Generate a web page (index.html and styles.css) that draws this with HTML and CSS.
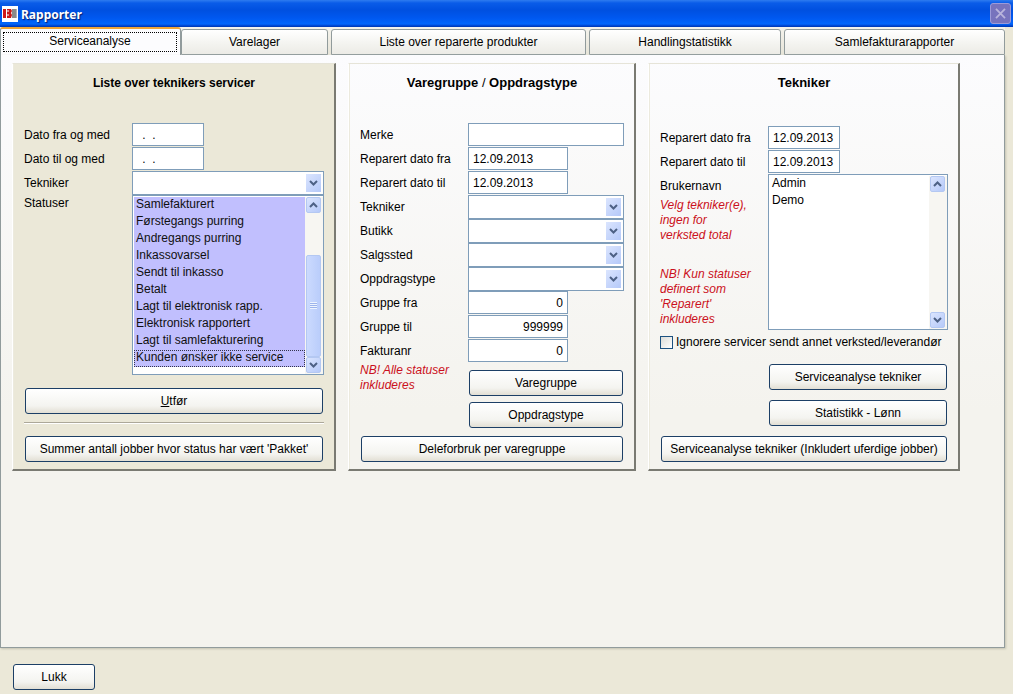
FILE: index.html
```html
<!DOCTYPE html>
<html lang="nb">
<head>
<meta charset="utf-8">
<title>Rapporter</title>
<link rel="stylesheet" href="styles.css">
</head>
<body>
<svg class="symbols" aria-hidden="true">
  <symbol id="down" viewBox="0 0 9 6"><path d="M1 1 L4.500 4.500 L8 1" fill="none" stroke="#4d6185" stroke-width="2"/></symbol>
  <symbol id="up" viewBox="0 0 9 6"><path d="M1 5 L4.500 1.500 L8 5" fill="none" stroke="#4d6185" stroke-width="2"/></symbol>
</svg>
<header class="titlebar">
  <svg class="logo" viewBox="0 0 16 16" aria-hidden="true">
    <rect width="16" height="16" fill="#fff"/>
    <path d="M1 3h3v9H1z" fill="#d01818"/>
    <path d="M5 3h4l1 2-1 2 1 2-1 3H5V3z" fill="#c81818"/>
    <path d="M5 5h2M5 9h2" stroke="#fff" stroke-width="1"/>
    <path d="M10 3h4v9h-4z" fill="#8a8a8a"/>
    <path d="M14 3h1v9h-1z" fill="#b5b0b0"/>
  </svg>
  <h1 class="title">Rapporter</h1>
  <button class="close" type="button" aria-label="Lukk vindu">
    <svg viewBox="0 0 21 21" aria-hidden="true"><path d="M5.500 5.500 L15.500 15.500 M15.500 5.500 L5.500 15.500" stroke="#b9b4dc" stroke-width="2"/></svg>
  </button>
</header>

<div class="tabs" role="tablist">
  <button class="tab tab-selected" type="button" role="tab" aria-selected="true"><span class="tab-focus">Serviceanalyse</span></button>
  <button class="tab" type="button" role="tab">Varelager</button>
  <button class="tab" type="button" role="tab">Liste over reparerte produkter</button>
  <button class="tab" type="button" role="tab">Handlingstatistikk</button>
  <button class="tab" type="button" role="tab">Samlefakturarapporter</button>
</div>

<main class="page" role="tabpanel">
  <section class="panel panel-beige">
    <h2 class="heading">Liste over teknikers servicer</h2>
    <div class="fields">
      <label class="label" for="d1">Dato fra og med</label>
      <input class="input date blank" id="d1" type="text" value=" .  .">
      <label class="label" for="d2">Dato til og med</label>
      <input class="input date blank" id="d2" type="text" value=" .  .">
      <label class="label" for="t1">Tekniker</label>
      <div class="combo"><select class="combo-box" id="t1"><option></option></select><span class="combo-arrow"><svg class="arrow"><use href="#down"/></svg></span></div>
      <label class="label label-top" for="st">Statuser</label>
      <div class="list statuses">
        <select class="list-box" id="st" multiple size="10">
          <option selected>Samlefakturert</option>
          <option selected>Førstegangs purring</option>
          <option selected>Andregangs purring</option>
          <option selected>Inkassovarsel</option>
          <option selected>Sendt til inkasso</option>
          <option selected>Betalt</option>
          <option selected>Lagt til elektronisk rapp.</option>
          <option selected>Elektronisk rapportert</option>
          <option selected>Lagt til samlefakturering</option>
          <option selected class="current">Kunden ønsker ikke service</option>
        </select>
        <div class="scroll">
          <button class="scroll-button" type="button" aria-label="Rull opp"><svg class="arrow"><use href="#up"/></svg></button>
          <div class="track"><div class="thumb"><span class="grip"></span></div></div>
          <button class="scroll-button" type="button" aria-label="Rull ned"><svg class="arrow"><use href="#down"/></svg></button>
        </div>
      </div>
    </div>
    <button class="button run" type="button"><u>U</u>tfør</button>
    <hr class="divider">
    <button class="button" type="button">Summer antall jobber hvor status har vært 'Pakket'</button>
  </section>

  <section class="panel">
    <h2 class="heading heading-wide">Varegruppe <span class="slash">/</span> Oppdragstype</h2>
    <div class="fields">
      <label class="label" for="m">Merke</label>
      <input class="input" id="m" type="text">
      <label class="label" for="rf">Reparert dato fra</label>
      <input class="input medium" id="rf" type="text" value="12.09.2013">
      <label class="label" for="rt">Reparert dato til</label>
      <input class="input medium" id="rt" type="text" value="12.09.2013">
      <label class="label" for="t2">Tekniker</label>
      <div class="combo"><select class="combo-box" id="t2"><option></option></select><span class="combo-arrow"><svg class="arrow"><use href="#down"/></svg></span></div>
      <label class="label" for="bu">Butikk</label>
      <div class="combo"><select class="combo-box" id="bu"><option></option></select><span class="combo-arrow"><svg class="arrow"><use href="#down"/></svg></span></div>
      <label class="label" for="sa">Salgssted</label>
      <div class="combo"><select class="combo-box" id="sa"><option></option></select><span class="combo-arrow"><svg class="arrow"><use href="#down"/></svg></span></div>
      <label class="label" for="op">Oppdragstype</label>
      <div class="combo"><select class="combo-box" id="op"><option></option></select><span class="combo-arrow"><svg class="arrow"><use href="#down"/></svg></span></div>
      <label class="label" for="gf">Gruppe fra</label>
      <input class="input medium number" id="gf" type="text" value="0">
      <label class="label" for="gt">Gruppe til</label>
      <input class="input medium number" id="gt" type="text" value="999999">
      <label class="label" for="fn">Fakturanr</label>
      <input class="input medium number" id="fn" type="text" value="0">
      <p class="note">NB! Alle statuser inkluderes</p>
      <div class="group-actions">
        <button class="button" type="button">Varegruppe</button>
        <button class="button" type="button">Oppdragstype</button>
      </div>
    </div>
    <button class="button parts" type="button">Deleforbruk per varegruppe</button>
  </section>

  <section class="panel">
    <h2 class="heading heading-wide heading-tall">Tekniker</h2>
    <div class="fields">
      <label class="label" for="r3">Reparert dato fra</label>
      <input class="input date" id="r3" type="text" value="12.09.2013">
      <label class="label" for="r4">Reparert dato til</label>
      <input class="input date" id="r4" type="text" value="12.09.2013">
      <div class="side">
        <label class="label" for="us">Brukernavn</label>
        <p class="note">Velg tekniker(e), ingen for verksted total</p>
        <p class="note note-low">NB! Kun statuser definert som 'Reparert' inkluderes</p>
      </div>
      <div class="list">
        <select class="list-box" id="us" multiple size="9">
          <option>Admin</option>
          <option>Demo</option>
        </select>
        <div class="scroll">
          <button class="scroll-button" type="button" aria-label="Rull opp"><svg class="arrow"><use href="#up"/></svg></button>
          <div class="track"></div>
          <button class="scroll-button" type="button" aria-label="Rull ned"><svg class="arrow"><use href="#down"/></svg></button>
        </div>
      </div>
    </div>
    <label class="check"><input class="check-box" type="checkbox">Ignorere servicer sendt annet verksted/leverandør</label>
    <div class="technician-actions">
      <button class="button indented" type="button">Serviceanalyse tekniker</button>
      <button class="button indented" type="button">Statistikk - Lønn</button>
      <button class="button" type="button">Serviceanalyse tekniker (Inkludert uferdige jobber)</button>
    </div>
  </section>
</main>

<footer class="footer">
  <button class="button exit" type="button">Lukk</button>
</footer>
</body>
</html>
```
FILE: styles.css
```css
* { box-sizing: border-box; }

body {
  margin: 0;
  min-height: 100vh;
  display: flex;
  flex-direction: column;
  background: #ebe8d8;
  color: #000;
  font: 12px/16px "Liberation Sans", Arial, sans-serif;
}

button, input, select { font: inherit; color: inherit; }

.symbols { display: none; }

.titlebar {
  display: flex;
  align-items: center;
  height: 27px;
  padding: 0 2px;
  background: linear-gradient(#2e7cf0 0, #0a5ce8 3px, #0050e0 10px, #0058f0 18px, #0266fc 24px, #0040c8 26px, #0038b0 27px);
}
.logo { width: 16px; height: 16px; }
.title {
  flex: 1;
  margin: 0;
  padding: 2px 0 0 3px;
  color: #fff;
  font: bold 12px/16px "Noto Sans", sans-serif;
  text-shadow: 1px 1px 1px #0a1f70;
}
.close {
  width: 21px;
  height: 21px;
  padding: 0;
  border: 1px solid #9c9ad8;
  border-radius: 3px;
  background: #7773bd;
}
.close svg { display: block; width: 100%; height: 100%; }

.tabs {
  display: grid;
  grid-template-columns: 178fr 147fr 255fr 192fr 221fr;
  align-items: end;
  gap: 3px;
  height: 28px;
  margin-right: 8px;
  background: linear-gradient(#f4f3ec, #e6e4d8);
}
.tab {
  min-width: 0;
  height: 26px;
  padding: 0;
  border: 1px solid #919b9c;
  border-radius: 3px 3px 0 0;
  background: linear-gradient(#fff, #f3f3ef 60%, #ecebe6);
  white-space: nowrap;
}
.tab-selected {
  height: 28px;
  margin-right: -3px;
  padding: 2px 3px 3px 2px;
  border-top: 2px solid #efa638;
  border-bottom: 0;
  background: #fcfcfe;
}
.tab-focus {
  display: block;
  height: 20px;
  border: 1px dotted #000;
  line-height: 17px;
}

.page {
  flex: 1;
  display: grid;
  grid-template-columns: 324fr 288fr 312fr;
  align-items: start;
  gap: 12px;
  margin-right: 8px;
  padding: 8px 44px 12px 11px;
  border: solid #919b9c;
  border-width: 0 1px 1px;
  background: linear-gradient(#fcfcfe, #f4f3ee 60%);
  box-shadow: 1px 1px 2px #c4c2b2;
}

.panel {
  display: flex;
  flex-direction: column;
  padding: 0 10px 7px 11px;
  border: 1px solid #fff;
  border-top-color: #e6e4d8;
  border-right: 2px solid #7a7a72;
  border-bottom: 2px solid #7a7a72;
  box-shadow: inset 1px 0 #eceade;
}
.panel-beige { background: #ebe8d8; }

.heading {
  height: 59px;
  margin: 0;
  padding-top: 11px;
  font: bold 12px/16px "Liberation Sans", Arial, sans-serif;
  text-align: center;
}
.heading-wide { font-size: 13px; }
.heading-tall { height: 62px; }
.slash { font-weight: normal; }

.fields {
  display: grid;
  grid-template-columns: 108px 1fr;
  grid-auto-rows: minmax(24px, auto);
}
.label { line-height: 24px; }
.label-top { line-height: 16px; }

.input {
  width: 100%;
  height: 23px;
  padding: 0 4px;
  border: 1px solid #7f9db9;
  background: #fff;
}
.date { width: 72px; }
.medium { width: 100px; }
.blank { padding-left: 6px; }
.number { text-align: right; }

.combo { display: grid; }
.combo-box {
  grid-area: 1 / 1;
  width: 100%;
  height: 24px;
  border: 1px solid #7f9db9;
  border-radius: 0;
  background: #fff;
  appearance: none;
}
.combo-arrow {
  grid-area: 1 / 1;
  justify-self: end;
  align-self: center;
  display: grid;
  place-items: center;
  width: 15px;
  height: 18px;
  margin-right: 3px;
  background: linear-gradient(135deg, #dbe5fe, #b5c9f9);
  pointer-events: none;
}
.arrow { display: block; width: 9px; height: 6px; }

.list {
  display: flex;
  height: 156px;
  padding-top: 1px;
  border: 1px solid #7f9db9;
  background: #fff;
}
.statuses { height: 180px; }
.list-box {
  flex: 1;
  min-width: 0;
  height: 100%;
  padding: 0 0 0 1px;
  border: 0;
  border-radius: 0;
  background: #fff;
  overflow: hidden;
}
.list-box option {
  min-height: 17px;
  height: 17px;
  padding: 0 2px;
  line-height: 19px;
}
.list-box option:checked { background: linear-gradient(#c1bffe, #c1bffe); }
.current { outline: 1px dotted #33334d; outline-offset: -1px; }

.scroll {
  display: flex;
  flex-direction: column;
  width: 18px;
  padding: 0 2px 1px 1px;
  background: #f7f6f2;
}
.scroll-button {
  display: grid;
  place-items: center;
  width: 15px;
  height: 16px;
  padding: 0;
  border: 1px solid #b4c8f2;
  border-radius: 2px;
  background: linear-gradient(135deg, #dbe5fe, #b5c9f9);
}
.track {
  flex: 1;
  display: flex;
  align-items: flex-end;
}
.thumb {
  display: grid;
  place-items: center;
  width: 15px;
  height: 71%;
  border: 1px solid #b4c8f2;
  border-radius: 2px;
  background: linear-gradient(90deg, #cbdafe, #bacdfb);
}
.grip {
  width: 7px;
  height: 7px;
  background: repeating-linear-gradient(#eef4fe 0 1px, #9db4ec 1px 2px);
}

.button {
  height: 26px;
  margin: 0 1px;
  padding: 0 4px;
  border: 1px solid #1c3f66;
  border-radius: 3px;
  background: linear-gradient(#fff, #f4f4f0 70%, #e2dfd4);
  white-space: nowrap;
}
.run { margin-top: 13px; }
.divider {
  width: 100%;
  height: 2px;
  margin: 8px 0 12px;
  border: 0;
  border-top: 1px solid #aca899;
  background: #fff;
}
.group-actions {
  display: flex;
  flex-direction: column;
  gap: 6px;
  padding-top: 7px;
}
.parts { margin-top: 8px; }

.note {
  margin: 0;
  color: #cb1020;
  font-style: italic;
  line-height: 15px;
}
.side .note { max-width: 94px; }
.side .label { display: block; }
.note-low { padding-top: 24px; }

.check {
  display: flex;
  align-items: center;
  gap: 3px;
  margin-top: 4px;
  white-space: nowrap;
}
.check-box {
  width: 13px;
  height: 13px;
  margin: 0;
  border: 1px solid #1c5180;
  background: linear-gradient(135deg, #dcdcd7, #fff);
  appearance: none;
}
.check-box:checked { background: #1c5180; }

.technician-actions {
  display: flex;
  flex-direction: column;
  gap: 10px;
  margin-top: 14px;
}
.indented { margin-left: 109px; }

.footer { padding: 16px 12px 4px; }
.exit { width: 82px; }
```
